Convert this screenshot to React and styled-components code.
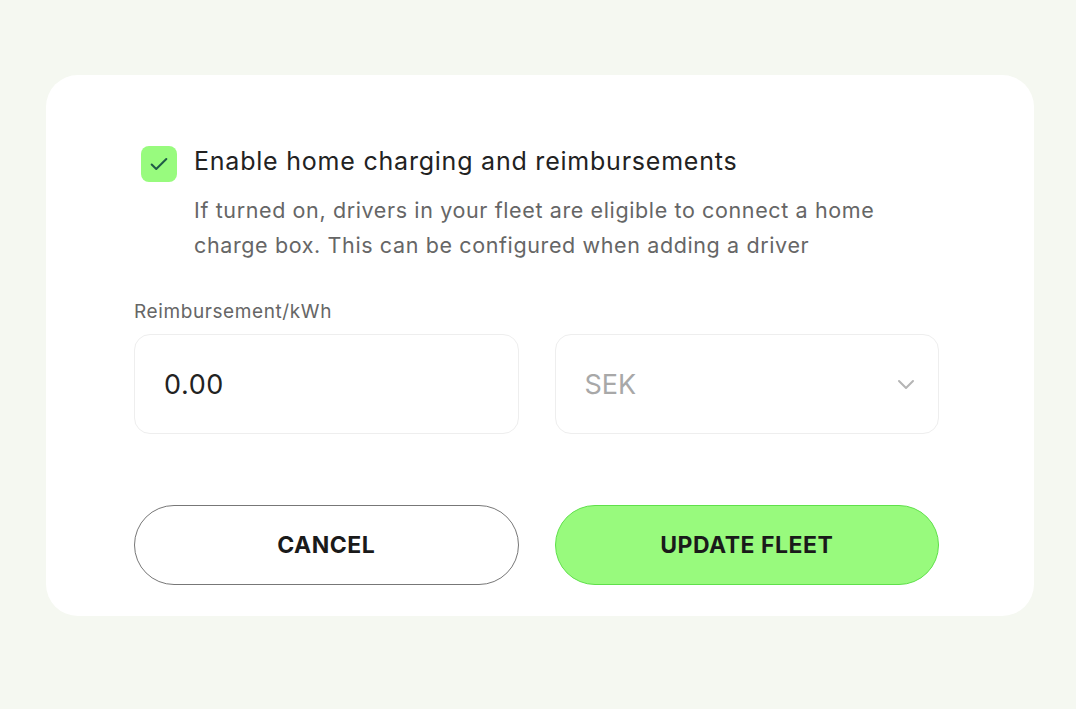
import styled, { createGlobalStyle } from "styled-components";

const GlobalStyle = createGlobalStyle`
  html, body {
    margin: 0;
    padding: 0;
    background: #f5f8f1;
    font-family: "Inter", "Noto Sans", sans-serif;
  }
  * { box-sizing: border-box; }
`;

const Page = styled.div`
  width: 1076px;
  height: 709px;
  padding: 75px 42px 0 46px;
`;

const Card = styled.div`
  width: 988px;
  height: 541px;
  background: #fff;
  border-radius: 32px;
  padding: 71px 95px 0 88px;
  display: flex;
  flex-direction: column;
`;

const CheckRow = styled.div`
  display: flex;
  gap: 17px;
  padding-left: 7px;
`;

const Box = styled.div`
  flex: none;
  width: 36px;
  height: 36px;
  border-radius: 8px;
  background: #98fb7e;
  display: flex;
  align-items: center;
  justify-content: center;
`;

const CheckText = styled.div`
  display: flex;
  flex-direction: column;
`;

const Title = styled.div`
  font-size: 25px;
  line-height: 30px;
  color: #222;
  letter-spacing: 0.78px;
`;

const Desc = styled.div`
  font-size: 21.5px;
  line-height: 35px;
  color: #666;
  margin-top: 17px;
  letter-spacing: 0.62px;
  max-width: 720px;
`;

const Label = styled.div`
  margin-top: 37px;
  font-size: 19px;
  line-height: 24px;
  color: #666;
  letter-spacing: 0.6px;
`;

const Row = styled.div`
  display: grid;
  grid-template-columns: 1fr 1fr;
  gap: 36px;
  margin-top: ${({ top }) => top}px;
`;

const Field = styled.div`
  height: 100px;
  border: 1px solid #eee;
  border-radius: 16px;
  padding: 0 20px 0 29px;
  display: flex;
  align-items: center;
  justify-content: space-between;
  font-size: 27px;
  letter-spacing: ${({ muted }) => (muted ? "0" : "0.6px")};
  color: ${({ muted }) => (muted ? "#a8a8a8" : "#222")};
`;

const Button = styled.button`
  height: 80px;
  border-radius: 40px;
  font-family: inherit;
  font-size: 23px;
  font-weight: 700;
  letter-spacing: 0.5px;
  color: #1a1a1a;
  background: ${({ primary }) => (primary ? "#98fa7d" : "#fff")};
  border: ${({ primary }) => (primary ? "1.5px solid #5fe04a" : "1.5px solid #777")};
`;

const Chevron = () => (
  <svg width="24" height="24" viewBox="0 0 24 24" fill="none" stroke="#b5b5b5" strokeWidth="2" strokeLinecap="round" strokeLinejoin="round">
    <path d="M5 9l7 7 7-7" />
  </svg>
);

export default function App() {
  return (
    <Page>
      <GlobalStyle />
      <Card>
        <CheckRow>
          <Box>
            <svg width="22" height="22" viewBox="0 0 24 24" fill="none" stroke="#1f5c47" strokeWidth="2.2" strokeLinecap="round" strokeLinejoin="round">
              <path d="M4 12.5l5 5L20 6.5" />
            </svg>
          </Box>
          <CheckText>
            <Title>Enable home charging and reimbursements</Title>
            <Desc>
              If turned on, drivers in your fleet are eligible to connect a home charge box. This can be configured when adding a driver
            </Desc>
          </CheckText>
        </CheckRow>
        <Label>Reimbursement/kWh</Label>
        <Row top={10}>
          <Field>0.00</Field>
          <Field muted>
            SEK
            <Chevron />
          </Field>
        </Row>
        <Row top={71}>
          <Button>CANCEL</Button>
          <Button primary>UPDATE FLEET</Button>
        </Row>
      </Card>
    </Page>
  );
}
